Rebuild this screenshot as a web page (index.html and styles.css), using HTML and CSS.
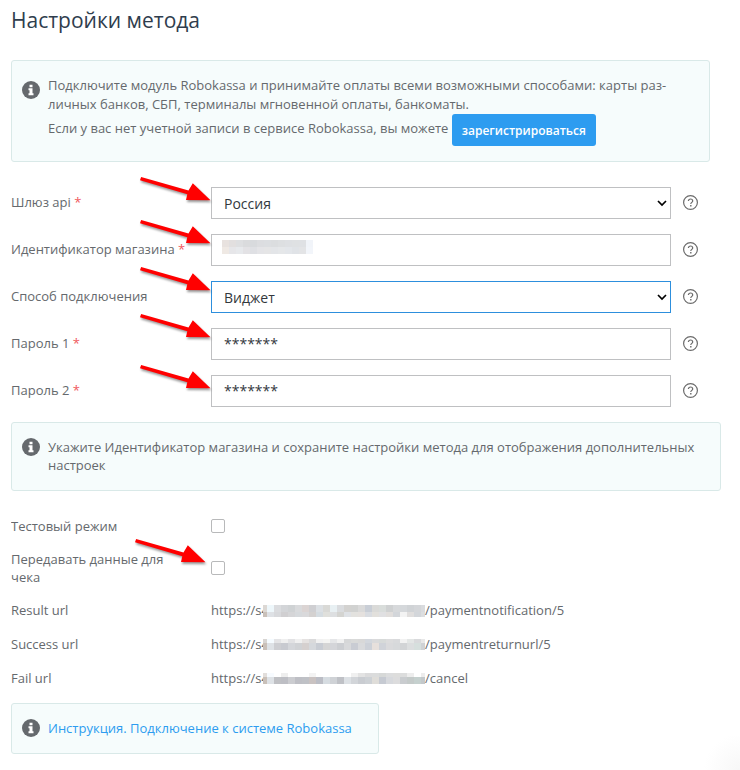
FILE: index.html
```
<!DOCTYPE html>
<html lang="ru">
<head>
    <meta charset="UTF-8">
    <meta name="viewport" content="width=device-width, initial-scale=1.0">
    <title>Настройки метода</title>
    <link rel="stylesheet" href="styles.css">
</head>
<body>
    <!-- shared icons -->
    <svg class="sprite" aria-hidden="true">
        <symbol id="info" viewBox="0 0 18 18">
            <circle cx="9" cy="9" r="9" fill="#65696d"/>
            <path d="M7.5 3.7h3v2.5h-3zM6.5 7.3h4v5h1v2h-5v-2h1v-3h-1z" fill="#fff"/>
        </symbol>
        <symbol id="help" viewBox="0 0 16 16">
            <circle cx="7.5" cy="7.5" r="6.9" fill="none" stroke="#6b6b6b" stroke-width="1.2"/>
            <path d="M5.4 6.1C5.4 4.8 6.3 4 7.5 4s2.2.7 2.2 1.9c0 1.5-1.9 1.5-1.9 3.1" fill="none" stroke="#6b6b6b" stroke-width="1.2"/>
            <path d="M7.1 10h1.4v1.4H7.1z" fill="#6b6b6b"/>
        </symbol>
        <symbol id="arrow" viewBox="0 0 76 36">
            <path d="M3.1 2 50.5 15.4 54.8 8.3 72.5 25.2 48 25 49.3 19.3 2 5.3z" fill="#f00"/>
        </symbol>
    </svg>

    <main class="settings">
        <h1>Настройки метода</h1>

        <div class="notice notice-main">
            <svg class="info-icon"><use href="#info"/></svg>
            <div>
                Подключите модуль Robokassa и принимайте оплаты всеми возможными способами: карты раз&shy;личных банков, СБП, терминалы мгновенной оплаты, банкоматы.
                <div class="register">Если у вас нет учетной записи в сервисе Robokassa, вы можете <button type="button" class="btn">зарегистрироваться</button></div>
            </div>
        </div>

        <form>
            <div class="row row-field">
                <label for="gateway">Шлюз api <span class="req">*</span></label>
                <div class="control">
                    <select id="gateway"><option>Россия</option></select>
                    <svg class="chevron" viewBox="0 0 10 7"><path d="M1 1l4 4 4-4"/></svg>
                    <svg class="arrow arrow-low"><use href="#arrow"/></svg>
                </div>
                <svg class="help"><use href="#help"/></svg>
            </div>
            <div class="row row-field">
                <label for="shop">Идентификатор магазина <span class="req">*</span></label>
                <div class="control">
                    <input type="text" id="shop">
                    <svg class="mosaic mosaic-shop" data-tiles="e8e2df e2dfdf dedfe1 dadbdd d8dadd dcdde0 dcdee1 dbdddf dddfe1 dee0e3 dfe1e3 dfe1e4 f1f4f9|efe9e4 e6e6e9 e7e9ec e3e2e5 dfe0e4 e4e4e7 e5e5e6 e3e5e8 e5e7e9 e3e6ea e0e3e7 e3e4e6 f2f5fa"></svg>
                    <svg class="arrow"><use href="#arrow"/></svg>
                </div>
                <svg class="help"><use href="#help"/></svg>
            </div>
            <div class="row row-field">
                <label for="mode">Способ подключения</label>
                <div class="control">
                    <select id="mode" class="active"><option>Виджет</option></select>
                    <svg class="chevron" viewBox="0 0 10 7"><path d="M1 1l4 4 4-4"/></svg>
                    <svg class="arrow"><use href="#arrow"/></svg>
                </div>
                <svg class="help"><use href="#help"/></svg>
            </div>
            <div class="row row-field">
                <label for="pass1">Пароль 1 <span class="req">*</span></label>
                <div class="control">
                    <input type="text" id="pass1" value="*******">
                    <svg class="arrow"><use href="#arrow"/></svg>
                </div>
                <svg class="help"><use href="#help"/></svg>
            </div>
            <div class="row row-field">
                <label for="pass2">Пароль 2 <span class="req">*</span></label>
                <div class="control">
                    <input type="text" id="pass2" value="*******">
                    <svg class="arrow arrow-low"><use href="#arrow"/></svg>
                </div>
                <svg class="help"><use href="#help"/></svg>
            </div>

            <div class="notice notice-hint">
                <svg class="info-icon"><use href="#info"/></svg>
                <div>Укажите Идентификатор магазина и сохраните настройки метода для отображения дополнительных настроек</div>
            </div>

            <div class="row row-first">
                <label for="test">Тестовый режим</label>
                <div class="control"><input type="checkbox" id="test"></div>
            </div>
            <div class="row">
                <label for="receipt">Передавать данные для чека</label>
                <div class="control">
                    <input type="checkbox" id="receipt">
                    <svg class="arrow arrow-check"><use href="#arrow"/></svg>
                </div>
            </div>
            <div class="row">
                <span>Result url</span>
                <div class="url">https://s4<svg class="mosaic" data-tiles="dcd8d4 eef7fb dbdcdf d3d5d8 cfd2d4 d9dadc dbd4d3 cfcfd2 dce0e4 d9d9d6 e8f0f3 dadcdf d3d2d0 d1d2d1 dadada c9ced6 dadad8 d9dddb cfd1d2 d7d9db d5d8db d0d3d6 d4d6d9 d9dbde|c9c0b9 dee1e5 d8d9dc d0cfd1 d5d5d7 d6d9dc d9d9db d4d1d0 d5dce1 e0e0dc dddfe1 d4d4d1 dfe2e6 e3e2df e5e1de d9dce1 e2e0dc e0e0e2 e1dedc d3d6da f3f3f3 e0dedd d3d6da dcdee0"></svg>/paymentnotification/5</div>
            </div>
            <div class="row">
                <span>Success url</span>
                <div class="url">https://s4<svg class="mosaic mosaic-short" data-tiles="d8d5d2 f5fbff e4e4e6 efefef e2e2e4 f0f0f0 e5e2e1 dadadb f1f1f1 f4f4f2 e5e6e8 f1f1f1 d6d7d8 d9dad9 d8d8d8 d3d7dd dadadb d7dad9 dcdcdd d9dadc f2f2f2 e3e6e5 d9dadc e8e8e8|c9c0b9 dee2e6 cdced2 c8cad0 d4d6da d0d2d5 d5d0cf d5d8dc c8ccd3 d5d5d5 d4d5d9 ccced2 d8d9db c9ccd3 d9dadc cdd1d8 e7e0dc d0d3d9 dadadc d7d9db d2d4d6 dcdedf d6dfdd cfd2d5"></svg>/paymentreturnurl/5</div>
            </div>
            <div class="row">
                <span>Fail url</span>
                <div class="url">https://s4<svg class="mosaic mosaic-short" data-tiles="e2dedb f7fbff ffffff eeeeee ffffff ffffff ffffff f3f3f3 ffffff ffffff ffffff ffffff ffffff f0f0f0 e3e3e3 dbdbdc dbdcdc d7d9d8 dcddde dddddc dcdddd ededed ffffff ededed|c9c0b9 dee2e6 bfc0c4 bdbec4 cbccd0 bebfc5 bfc1c6 c9c2c1 bbbdc5 d6dce1 cfd2d6 bfc1c6 dde1e5 d2d5d9 c9ccd1 cdd1d5 dfddd9 c6cad2 d7d9dd dcdcdd c9cccf c4cac9 c5d0ce c3c8cb"></svg>/cancel</div>
            </div>
        </form>

        <div class="notice notice-link">
            <svg class="info-icon"><use href="#info"/></svg>
            <a href="#">Инструкция. Подключение к системе Robokassa</a>
        </div>
    </main>

    <script>
        // fill the masked values with 7px tiles
        document.querySelectorAll('.mosaic').forEach(function (svg) {
            const shiftX = svg.classList.contains('mosaic-shop') ? 0 : -3;
            const shiftY = svg.classList.contains('mosaic-short') ? -3 : 0;
            svg.dataset.tiles.split('|').forEach(function (line, row) {
                line.split(' ').forEach(function (color, col) {
                    const rect = document.createElementNS('http://www.w3.org/2000/svg', 'rect');
                    rect.setAttribute('x', col * 7 + shiftX);
                    rect.setAttribute('y', row * 7 + shiftY);
                    rect.setAttribute('width', 7);
                    rect.setAttribute('height', 7);
                    rect.setAttribute('fill', '#' + color);
                    svg.appendChild(rect);
                });
            });
        });
    </script>
</body>
</html>
```
FILE: styles.css
```
* {
    box-sizing: border-box;
}

body {
    margin: 0;
    min-height: 100vh;
    font-family: "Open Sans", sans-serif;
    font-size: 13px;
    line-height: 19px;
    color: #65696d;
    background: #fff radial-gradient(circle at 100% 100%, #f7f7f7, #fff 36px) no-repeat;
}

.sprite {
    position: absolute;
    width: 0;
    height: 0;
}

.settings {
    padding: 6px 19px 16px 11px;
}

h1 {
    margin: 0 0 26px;
    font-size: 21px;
    font-weight: 400;
    line-height: 28px;
    color: #2f3d4d;
}

.notice {
    display: flex;
    align-items: flex-start;
    gap: 8px;
    padding: 15px 26px 15px 10px;
    border: 1px solid #d9e9e8;
    border-radius: 3px;
    background: #f6fcfc;
}

.notice-main {
    margin: 0 11px 25px 0;
}

.notice-hint {
    padding-right: 15px;
    padding-bottom: 16px;
    line-height: 18px;
}

.notice-link {
    width: fit-content;
}

.info-icon {
    flex: none;
    width: 18px;
    height: 18px;
}

.notice-main .info-icon {
    margin-top: 5px;
}

.btn {
    height: 32px;
    padding: 0 10px;
    border: 0;
    border-radius: 3px;
    background: #2d9cf0;
    color: #fff;
    font: 600 12px "Open Sans", sans-serif;
    vertical-align: middle;
}

a {
    color: #2d9cf0;
    text-decoration: none;
}

.row {
    display: grid;
    grid-template-columns: 200px 1fr 50px;
    align-items: center;
    margin-bottom: 15px;
}

.row-first {
    margin-top: 26px;
}

label {
    padding-right: 20px;
    line-height: 18px;
}

.row-field label {
    padding: 0 0 2px;
}

.req {
    color: #f0585d;
}

.control {
    position: relative;
    display: flex;
    align-items: center;
}

select,
input[type="text"] {
    width: 100%;
    height: 32px;
    padding: 0 12px;
    border: 1px solid #bfc0c2;
    border-radius: 0;
    background: #fff;
    color: #33383d;
    font: 14px "Open Sans", sans-serif;
    appearance: none;
}

input[type="text"] {
    padding-bottom: 2px;
}

select.active {
    border-color: #2d8fdd;
}

input[type="checkbox"] {
    width: 14px;
    height: 14px;
    margin: 0;
    border: 1px solid #b8b9ba;
    border-radius: 2px;
    background: #fff;
    appearance: none;
}

.chevron {
    position: absolute;
    right: 4px;
    width: 10px;
    height: 7px;
    fill: none;
    stroke: #000;
    stroke-width: 1.7;
    pointer-events: none;
}

.help {
    width: 16px;
    height: 16px;
    margin-left: 12px;
}

/* pointers over the fields */
.arrow {
    position: absolute;
    left: -73px;
    top: -16px;
    width: 76px;
    height: 36px;
    pointer-events: none;
    filter: drop-shadow(1px 2px 1px rgba(0, 0, 0, 0.4));
}

.arrow-low {
    top: -12px;
}

.arrow-check {
    left: -78px;
    top: -24px;
}

.mosaic {
    width: 162px;
    height: 12px;
    margin-left: -6px;
    vertical-align: -2px;
    shape-rendering: crispEdges;
}

.mosaic-short {
    height: 11px;
    vertical-align: -1px;
}

.mosaic-shop {
    position: absolute;
    left: 17px;
    top: 6px;
    width: 91px;
    height: 14px;
}
```
